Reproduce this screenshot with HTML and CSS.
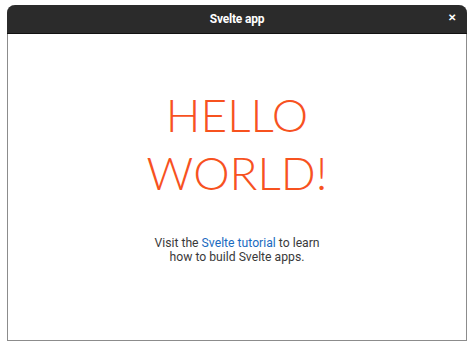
FILE: index.html
```html
<!DOCTYPE html>
<html lang="en">
<head>
    <meta charset="UTF-8">
    <title>Svelte app</title>
    <link rel="stylesheet" href="styles.css">
</head>
<body>
    <div class="window">
        <div class="titlebar">
            <span class="title">Svelte app</span>
            <span class="close">&#x2715;</span>
        </div>
        <main>
            <h1>Hello world!</h1>
            <p>Visit the <a href="#">Svelte tutorial</a> to learn<br>how to build Svelte apps.</p>
        </main>
    </div>
</body>
</html>
```

FILE: styles.css
```css
body {
    margin: 0;
    padding: 5px 7px 6px;
    background: #ffffff;
    font-family: Roboto, "Noto Sans", sans-serif;
}

.window {
    height: 336px;
    box-sizing: border-box;
    display: flex;
    flex-direction: column;
    border: 1px solid #8c8c8c;
    border-top: none;
    border-radius: 8px 8px 0 0;
    background: #ffffff;
}

.titlebar {
    height: 28px;
    background: #2b2b2b;
    border-bottom: 1px solid #111111;
    border-radius: 8px 8px 0 0;
    margin: 0 -1px;
    display: flex;
    align-items: center;
    justify-content: center;
    position: relative;
    color: #ffffff;
}

.title {
    font-size: 12px;
    font-weight: bold;
    letter-spacing: -0.2px;
}

.close {
    position: absolute;
    right: 11px;
    top: 7px;
    font-size: 10px;
    font-weight: bold;
}

main {
    text-align: center;
    max-width: 240px;
    margin: 0 auto;
    padding-top: 52px;
}

h1 {
    margin: 0;
    color: #f7521f;
    text-transform: uppercase;
    font-family: Lato, sans-serif;
    font-size: 46px;
    font-weight: 300;
    line-height: 58px;
}

p {
    margin: 34px 0 0;
    font-size: 12.2px;
    line-height: 14px;
    color: #3a3a3a;
}

a {
    color: #1a6bbf;
    text-decoration: none;
}
```
